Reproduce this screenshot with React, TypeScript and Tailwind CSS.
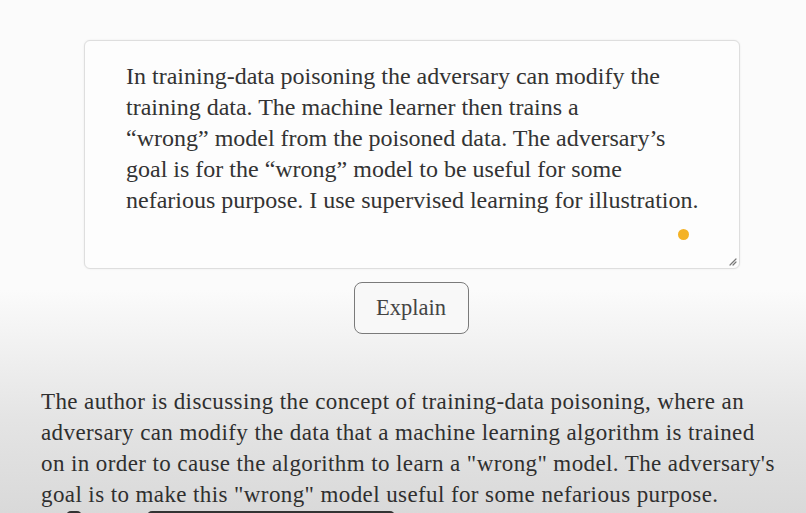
import React from "react";

const serif = { fontFamily: '"Liberation Serif", "DejaVu Serif", serif' };

export default function App() {
  const top = [
    "In training-data poisoning the adversary can modify the",
    "training data. The machine learner then trains a",
    "\u201cwrong\u201d model from the poisoned data. The adversary\u2019s",
    "goal is for the \u201cwrong\u201d model to be useful for some",
    "nefarious purpose. I use supervised learning for illustration.",
  ];
  const bottom = [
    "The author is discussing the concept of training-data poisoning, where an",
    "adversary can modify the data that a machine learning algorithm is trained",
    "on in order to cause the algorithm to learn a \"wrong\" model. The adversary's",
    "goal is to make this \"wrong\" model useful for some nefarious purpose.",
  ];
  return (
    <div
      className="w-[806px] h-[513px] overflow-hidden bg-[linear-gradient(to_bottom,#fbfbfb_0px,#fbfbfb_290px,#e4e4e4_420px,#d9d9d9_513px)] flex flex-col"
      style={serif}
    >
      <div className="pt-[40px] pl-[84px]">
        <div className="relative w-[656px] h-[229px] rounded-[6px] border border-[#dedede] bg-[#fdfdfd] shadow-[0_0_2px_rgba(0,0,0,0.08)] pl-[41px] pt-[20px]">
          <div className="text-[24px] leading-[31px] text-[#333]">
            {top.map((l, i) => (
              <div key={i} className="whitespace-nowrap">{l}</div>
            ))}
          </div>
          <div className="absolute left-[593px] top-[188px] w-[11px] h-[11px] rounded-full bg-[#f4b225]" />
          <svg className="absolute right-[2px] bottom-[2px]" width="9" height="9" viewBox="0 0 9 9">
            <path d="M8 2 L2 8 M8 5 L5 8" stroke="#777" strokeWidth="1.2" strokeLinecap="round" />
          </svg>
        </div>
      </div>
      <div className="flex justify-center pt-[13px]">
        <div className="w-[115px] h-[52px] ml-[16px] rounded-[8px] border border-[#7a7a7a] bg-[#f8f8f8] flex items-center justify-center text-[22.5px] text-[#444]">
          Explain
        </div>
      </div>
      <div className="pl-[41px] pt-[52px] text-[23px] leading-[31px] text-[#2f2f2f] tracking-[0.4px]">
        {bottom.map((l, i) => (
          <div key={i} className="whitespace-nowrap">{l}</div>
        ))}
      </div>
      <div className="flex pl-[66px] pt-[1px]">
        <div className="w-[16px] h-[10px] rounded-full bg-[#333]" />
        <div className="w-[248px] h-[10px] ml-[65px] rounded-[6px] bg-[#333]" />
      </div>
    </div>
  );
}
